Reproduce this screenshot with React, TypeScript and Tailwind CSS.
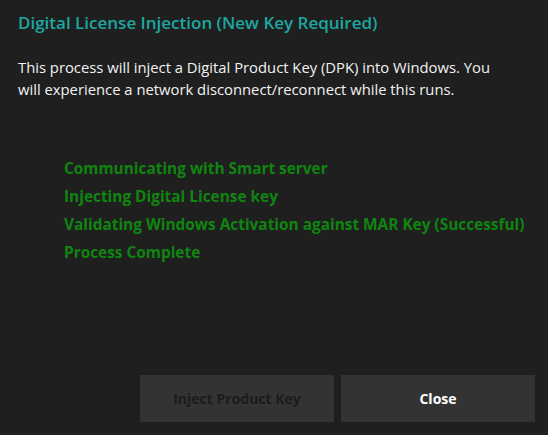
export default function App() {
  const steps = [
    "Communicating with Smart server",
    "Injecting Digital License key",
    "Validating Windows Activation against MAR Key (Successful)",
    "Process Complete",
  ];

  return (
    <div
      className="w-[548px] h-[435px] bg-[#1f1f1f] flex flex-col overflow-hidden"
      style={{ fontFamily: '"Open Sans", "Liberation Sans", sans-serif' }}
    >
      {/* Header */}
      <h1 className="pl-[18px] pt-[11px] h-[24px] leading-[24px] text-[17px] font-semibold text-[#1ca7a0] box-content">
        Digital License Injection (New Key Required)
      </h1>

      {/* Description */}
      <p className="pl-[18px] pr-[10px] mt-[21px] text-[14.8px] leading-[22px] text-[#f2f2f2] whitespace-nowrap">
        This process will inject a Digital Product Key (DPK) into Windows. You
        <br />
        will experience a network disconnect/reconnect while this runs.
      </p>

      {/* Status lines */}
      <div className="pl-[64px] mt-[55px] flex flex-col">
        {steps.map((s) => (
          <div
            key={s}
            className="h-[28px] leading-[28px] text-[15.4px] font-bold text-[#0f850f] whitespace-nowrap"
          >
            {s}
          </div>
        ))}
      </div>

      {/* Buttons */}
      <div className="mt-auto mb-[13px] pr-[13px] flex justify-end gap-[7px]">
        <button className="w-[194px] h-[47px] bg-[#333333] text-[14px] font-bold text-[#1c1c1c]">
          Inject Product Key
        </button>
        <button className="w-[194px] h-[47px] bg-[#333333] text-[14px] font-bold text-white">
          Close
        </button>
      </div>
    </div>
  );
}
